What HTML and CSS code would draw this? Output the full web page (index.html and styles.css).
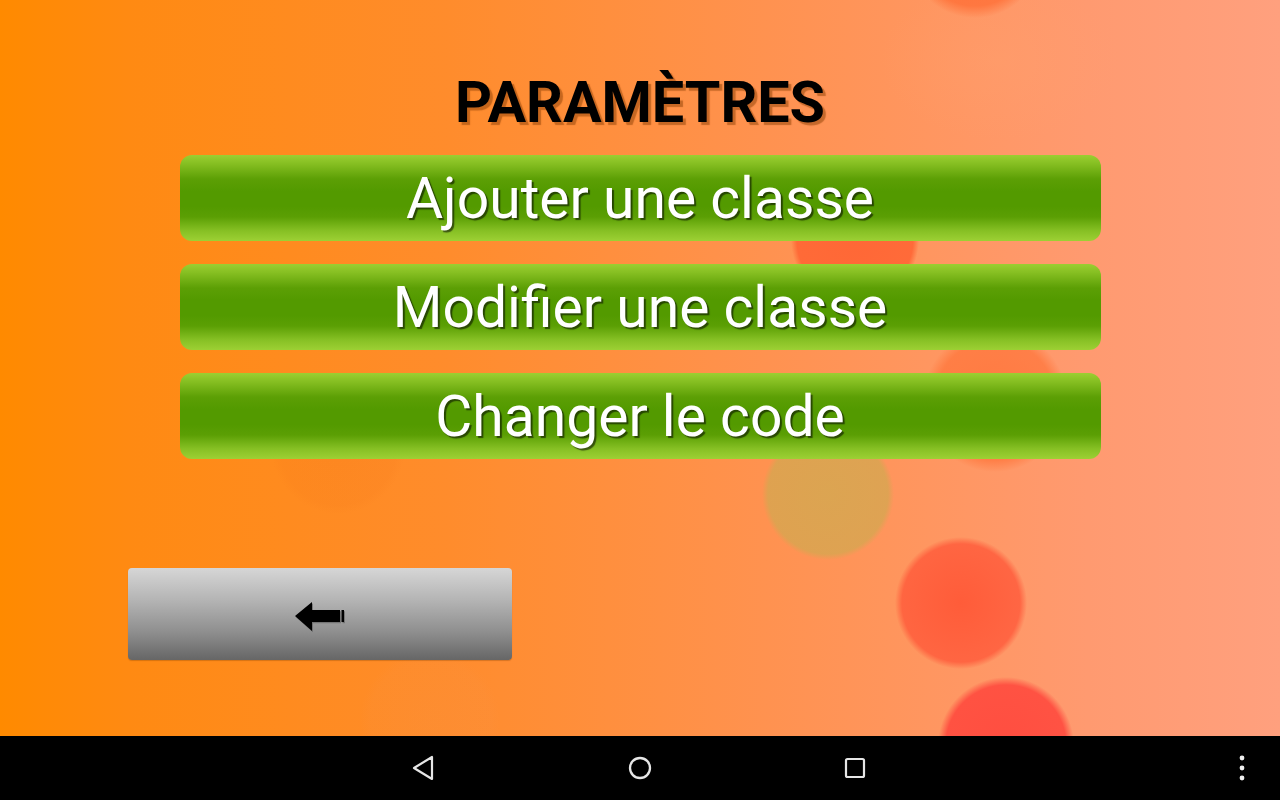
FILE: index.html
```html
<!DOCTYPE html>
<html lang="fr">
<head>
<meta charset="utf-8">
<title>Paramètres</title>
<link rel="stylesheet" href="styles.css">
</head>
<body>
<div class="device">
  <main class="screen">
    <h1 class="title">PARAMÈTRES</h1>
    <div class="menu">
      <button class="menu-btn">Ajouter une classe</button>
      <button class="menu-btn">Modifier une classe</button>
      <button class="menu-btn">Changer le code</button>
    </div>
    <button class="back-btn" aria-label="Retour">
      <svg class="back-arrow" width="52" height="36" viewBox="0 0 52 36">
        <g fill="#555" opacity="0.55" transform="translate(1,1.2)">
          <polygon points="1,17 18,3 18,11 46,11 46,23 18,23 18,32"/>
          <rect x="47.5" y="11" width="2.5" height="12"/>
        </g>
        <polygon fill="#000" points="1,17 18,3 18,11 46,11 46,23 18,23 18,32"/>
        <rect fill="#000" x="47.5" y="11" width="2.5" height="12"/>
      </svg>
    </button>
  </main>
  <nav class="navbar">
    <svg class="nav-icon nav-back" width="24" height="26" viewBox="0 0 24 26">
      <polygon points="21,2 21,24 3,13" fill="none" stroke="#e6e6e6" stroke-width="2.2" stroke-linejoin="round"/>
    </svg>
    <svg class="nav-icon nav-home" width="26" height="26" viewBox="0 0 26 26">
      <circle cx="13" cy="13" r="10" fill="none" stroke="#e6e6e6" stroke-width="2.3"/>
    </svg>
    <svg class="nav-icon nav-recent" width="24" height="24" viewBox="0 0 24 24">
      <rect x="3" y="3" width="18" height="18" rx="1.5" fill="none" stroke="#e6e6e6" stroke-width="2.2"/>
    </svg>
    <svg class="nav-icon nav-more" width="8" height="28" viewBox="0 0 8 28">
      <circle cx="4" cy="4" r="2.4" fill="#eee"/>
      <circle cx="4" cy="14" r="2.4" fill="#eee"/>
      <circle cx="4" cy="24" r="2.4" fill="#eee"/>
    </svg>
  </nav>
</div>
</body>
</html>
```

FILE: styles.css
```css
* { box-sizing: border-box; }

html, body {
  margin: 0;
  padding: 0;
  width: 1280px;
  height: 800px;
  overflow: hidden;
  font-family: Roboto, "Noto Sans", "Liberation Sans", sans-serif;
}

.device {
  width: 1280px;
  height: 800px;
  display: flex;
  flex-direction: column;
}

.screen {
  height: 736px;
  display: flex;
  flex-direction: column;
  background:
    radial-gradient(circle at 975px -50px, rgba(255, 98, 40, 0.75) 0, rgba(255, 98, 40, 0.6) 56px, rgba(255, 98, 40, 0) 68px),
    radial-gradient(circle at 855px 240px, rgba(255, 96, 48, 0.85) 0, rgba(255, 96, 48, 0.8) 58px, rgba(255, 96, 48, 0) 64px),
    radial-gradient(circle at 995px 400px, rgba(255, 110, 50, 0.7) 0, rgba(255, 110, 50, 0.6) 60px, rgba(255, 110, 50, 0) 72px),
    radial-gradient(circle at 828px 494px, rgba(208, 170, 80, 0.75) 0, rgba(210, 168, 80, 0.72) 60px, rgba(210, 168, 80, 0) 66px),
    radial-gradient(circle at 961px 603px, rgba(255, 82, 50, 0.85) 0, rgba(255, 85, 55, 0.75) 59px, rgba(255, 85, 55, 0) 66px),
    radial-gradient(circle at 1006px 745px, rgba(255, 70, 60, 0.9) 0, rgba(255, 70, 60, 0.85) 60px, rgba(255, 70, 60, 0) 68px),
    radial-gradient(circle at 338px 447px, rgba(240, 110, 20, 0.14) 0, rgba(240, 110, 20, 0.1) 58px, rgba(240, 110, 20, 0) 67px),
    radial-gradient(circle at 430px 720px, rgba(240, 150, 90, 0.12) 0, rgba(240, 150, 90, 0.08) 60px, rgba(240, 150, 90, 0) 70px),
    radial-gradient(ellipse at 1000px 60px, rgba(255, 160, 110, 0.35) 0, rgba(255, 160, 110, 0) 120px),
    linear-gradient(90deg, #ff8a00 0%, #ff8a12 10%, #ff8c2c 35%, #ff9250 60%, #ff9a70 85%, #ffa07e 100%);
}

.title {
  margin: 75px 0 0;
  height: 56px;
  font-size: 57.5px;
  line-height: 56px;
  font-weight: 700;
  text-align: center;
  color: #000;
  letter-spacing: 0;
  text-shadow: 3px 3px 1px rgba(150, 70, 10, 0.55);
}

.menu {
  margin: 24px auto 0;
  width: 921px;
  display: flex;
  flex-direction: column;
  gap: 23px;
}

.menu-btn {
  height: 86px;
  border: none;
  border-radius: 12px;
  padding: 0;
  font-family: inherit;
  font-size: 57px;
  font-weight: 400;
  color: #fff;
  text-shadow: 2px 2px 1px rgba(0, 0, 0, 0.55);
  display: flex;
  align-items: center;
  justify-content: center;
  background: linear-gradient(180deg,
    #9bcf32 0%,
    #86bf22 10%,
    #5c9f05 28%,
    #539a00 42%,
    #539a00 60%,
    #5b9f04 72%,
    #86c024 88%,
    #9dd034 100%);
}

.back-btn {
  margin: 109px 0 0 128px;
  width: 384px;
  height: 92px;
  border: none;
  border-radius: 4px;
  padding: 0;
  display: flex;
  align-items: center;
  justify-content: center;
  background: linear-gradient(180deg, #d6d6d6 0%, #b4b4b4 35%, #8e8e8e 70%, #666 100%);
  box-shadow: 0 1px 1px rgba(120, 60, 0, 0.3);
}

.back-arrow {
  display: block;
  margin-left: 0;
  margin-top: 5px;
}

.navbar {
  height: 64px;
  background: #000;
  display: flex;
  align-items: center;
}

.nav-icon { display: block; }

.nav-back { margin-left: 411px; }
.nav-home { margin-left: 192px; }
.nav-recent { margin-left: 190px; }
.nav-more { margin-left: 371px; }
```
